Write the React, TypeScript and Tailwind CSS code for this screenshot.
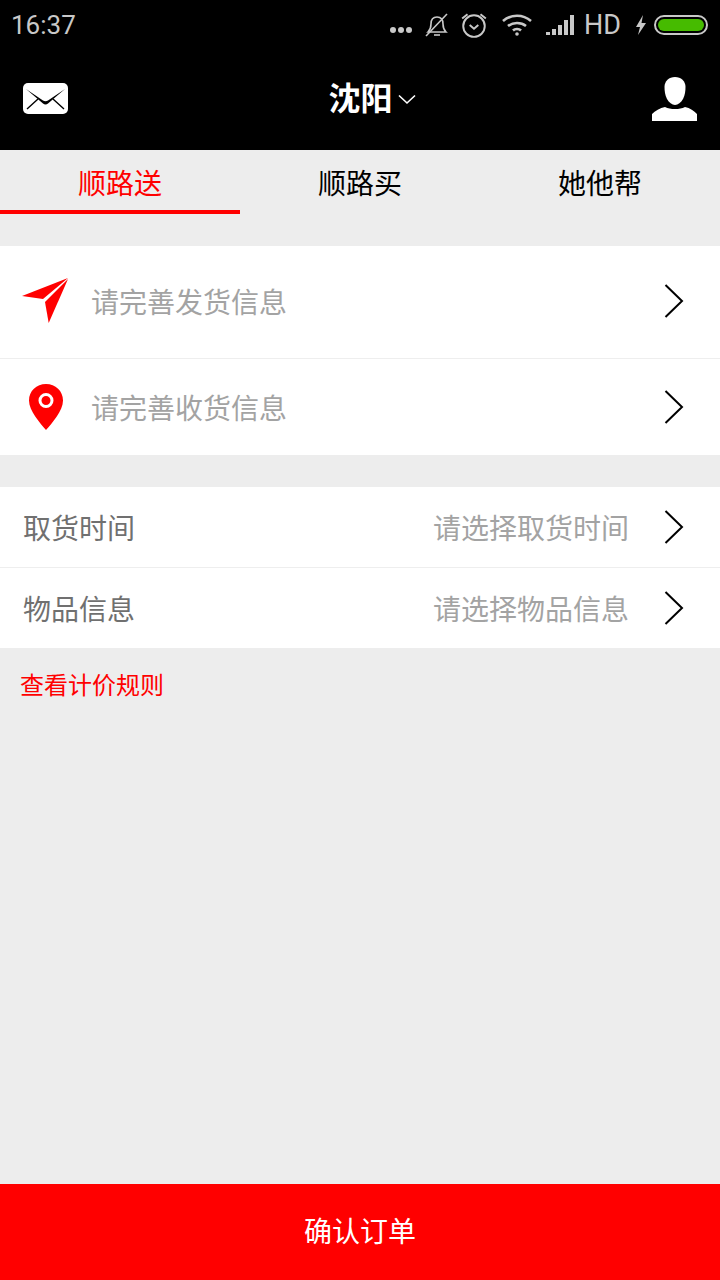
const cjk = "font-['Roboto','Noto_Sans_CJK_SC',sans-serif]";

function StatusBar() {
  return (
    <div className="flex h-[50px] items-center justify-between pl-[11px] pr-[12px] text-[#c8c8c8]">
      <span className="text-[26px] leading-none">16:37</span>
      <div className="flex items-center">
        <svg width="24" height="8" viewBox="0 0 24 8" className="mt-[10px]" fill="#c8c8c8">
          <circle cx="4" cy="4" r="3" />
          <circle cx="12" cy="4" r="3" />
          <circle cx="20" cy="4" r="3" />
        </svg>
        <svg width="24" height="26" viewBox="0 0 24 26" className="ml-[12px]" fill="none" stroke="#c8c8c8" strokeWidth="1.6">
          <path d="M3 20h18c-2-2-3-4-3-8 0-4-2-7-6-7s-6 3-6 7c0 4-1 6-3 8z" />
          <path d="M9 23h6" />
          <path d="M1 24 22 2" />
        </svg>
        <svg width="28" height="28" viewBox="0 0 26 26" className="ml-[11px]" fill="none" stroke="#c8c8c8" strokeWidth="1.8">
          <circle cx="13" cy="14" r="10" />
          <path d="M9 13l4 3.5 4-3.5" />
          <path d="M2 7l5-4M24 7l-5-4" />
        </svg>
        <svg width="32" height="24" viewBox="0 0 32 24" className="ml-[13px]" fill="none" stroke="#c8c8c8" strokeWidth="2.6">
          <path d="M2 8c8-7 20-7 28 0" />
          <path d="M7 13c5-4 13-4 18 0" />
          <path d="M12 17.500c2-2 6-2 8 0" />
          <circle cx="16" cy="21" r="1.800" fill="#c8c8c8" stroke="none" />
        </svg>
        <svg width="30" height="22" viewBox="0 0 30 22" className="ml-[13px]" fill="#c8c8c8">
          <rect x="0" y="18" width="4" height="3" />
          <rect x="6" y="15" width="4" height="6" />
          <rect x="12" y="11" width="4" height="10" />
          <rect x="18" y="6" width="4" height="15" />
          <rect x="24" y="1" width="4" height="20" />
        </svg>
        <span className="ml-[8px] text-[27px] leading-none">HD</span>
        <svg width="12" height="22" viewBox="0 0 12 22" className="ml-[14px]" fill="#c8c8c8">
          <path d="M8 1 1 13h4l-2 8 8-12H6.500z" />
        </svg>
        <div className="ml-[7px] h-[20px] w-[54px] rounded-[10px] border-2 border-[#c8c8c8] p-[2px]">
          <div className="h-full w-full rounded-[6px] bg-[#46bb00]" />
        </div>
      </div>
    </div>
  );
}

function Header() {
  return (
    <div className="flex h-[100px] items-center justify-between pb-[2px] pl-[23px] pr-[23px]">
      <svg width="45" height="31" viewBox="0 0 45 31" className="mt-[-1px]">
        <rect width="45" height="31" rx="5" fill="#fff" />
        <path d="M3 6 20 17.500c1.500 1 3.500 1 5 0L42 6 25 20.500c-1.500 1.300-3.500 1.300-5 0z" fill="#000" />
        <path d="M15 16 4 26M30 16l11 10" stroke="#000" strokeWidth="1.400" />
      </svg>
      <div className="flex items-center pl-[24px]">
        <span className="text-[32px] font-bold leading-none text-white">沈阳</span>
        <svg width="18" height="11" viewBox="0 0 18 11" className="ml-[5px]" fill="none" stroke="#fff" strokeWidth="1.600">
          <path d="M1 1.500 9 9l8-7.500" />
        </svg>
      </div>
      <svg width="45" height="44" viewBox="0 0 45 44" className="mt-[-1px]" fill="#fff">
        <path d="M23 0c6 0 10.500 4 10.500 10 0 4-.5 8-2.500 12-2 3.500-5 6-8 6s-6-2.500-8-6c-2-4-2.500-8-2.500-12C12.500 4 17 0 23 0z" />
        <path d="M0 44v-7c3-3 8-6 13-7 3 1.500 6 2 10 2s7-.5 10-2c5 1 9 4 12 7v7z" />
      </svg>
    </div>
  );
}

function Tabs() {
  const tabs = ["顺路送", "顺路买", "她他帮"];
  return (
    <div className="flex h-[64px]">
      {tabs.map((t, i) => (
        <div
          key={t}
          className={`flex flex-1 items-center justify-center border-b-4 pt-[10px] text-[28px] leading-none ${
            i === 0 ? "border-[#ff0000] text-[#ff0000]" : "border-transparent text-black"
          }`}
        >
          {t}
        </div>
      ))}
    </div>
  );
}

function Chevron() {
  return (
    <svg width="20" height="34" viewBox="0 0 20 34" fill="none" stroke="#000" strokeWidth="2" className="shrink-0">
      <path d="M1.500 1 18 17 1.500 33" />
    </svg>
  );
}

function AddressRow({ icon, label, height }: { icon: React.ReactNode; label: string; height: string }) {
  return (
    <div className={`flex items-center pl-[22px] pr-[36px] ${height}`}>
      <div className="flex w-[69px] shrink-0">{icon}</div>
      <span className="flex-1 pt-[6px] text-[28px] leading-none text-[#a3a3a3]">{label}</span>
      <Chevron />
    </div>
  );
}

function FieldRow({ label, hint }: { label: string; hint: string }) {
  return (
    <div className="flex h-[80px] items-center pl-[23px] pr-[36px]">
      <span className="flex-1 pt-[6px] text-[28px] leading-none text-[#707070]">{label}</span>
      <span className="mr-[35px] pt-[6px] text-[28px] leading-none text-[#a3a3a3]">{hint}</span>
      <Chevron />
    </div>
  );
}

export default function App() {
  return (
    <div className={`flex h-[1280px] w-[720px] flex-col overflow-hidden bg-[#ededed] ${cjk}`}>
      <div className="bg-black">
        <StatusBar />
        <Header />
      </div>
      <Tabs />

      <div className="mt-[32px] bg-white">
        <AddressRow
          height="h-[112px] pb-[2px]"
          label="请完善发货信息"
          icon={
            <svg width="46" height="46" viewBox="0 0 46 46" fill="#ff0000">
              <path d="M46 0 0 18l21 3z" />
              <path d="M46 1 23 24l3.700 21z" />
            </svg>
          }
        />
        <div className="h-px bg-[#eeeeee]" />
        <AddressRow
          height="h-[96px]"
          label="请完善收货信息"
          icon={
            <svg width="46" height="46" viewBox="0 0 46 46" fill="#ff0000" className="ml-[1px]">
              <path d="M23 0C13.500 0 6 7 6 16.500 6 27 17 39 23 46c6-7 17-19 17-29.500C40 7 32.500 0 23 0z" />
              <circle cx="23" cy="16.500" r="6" fill="none" stroke="#fff" strokeWidth="3" />
            </svg>
          }
        />
      </div>

      <div className="mt-[32px] bg-white">
        <FieldRow label="取货时间" hint="请选择取货时间" />
        <div className="h-px bg-[#eeeeee]" />
        <FieldRow label="物品信息" hint="请选择物品信息" />
      </div>

      <div className="mt-[22px] pl-[20px] text-[24px] leading-[32px] text-[#ff0000]">查看计价规则</div>

      <div className="mt-auto flex h-[96px] items-center justify-center bg-[#ff0000] pt-[2px] text-[28px] leading-none text-white">
        确认订单
      </div>
    </div>
  );
}
